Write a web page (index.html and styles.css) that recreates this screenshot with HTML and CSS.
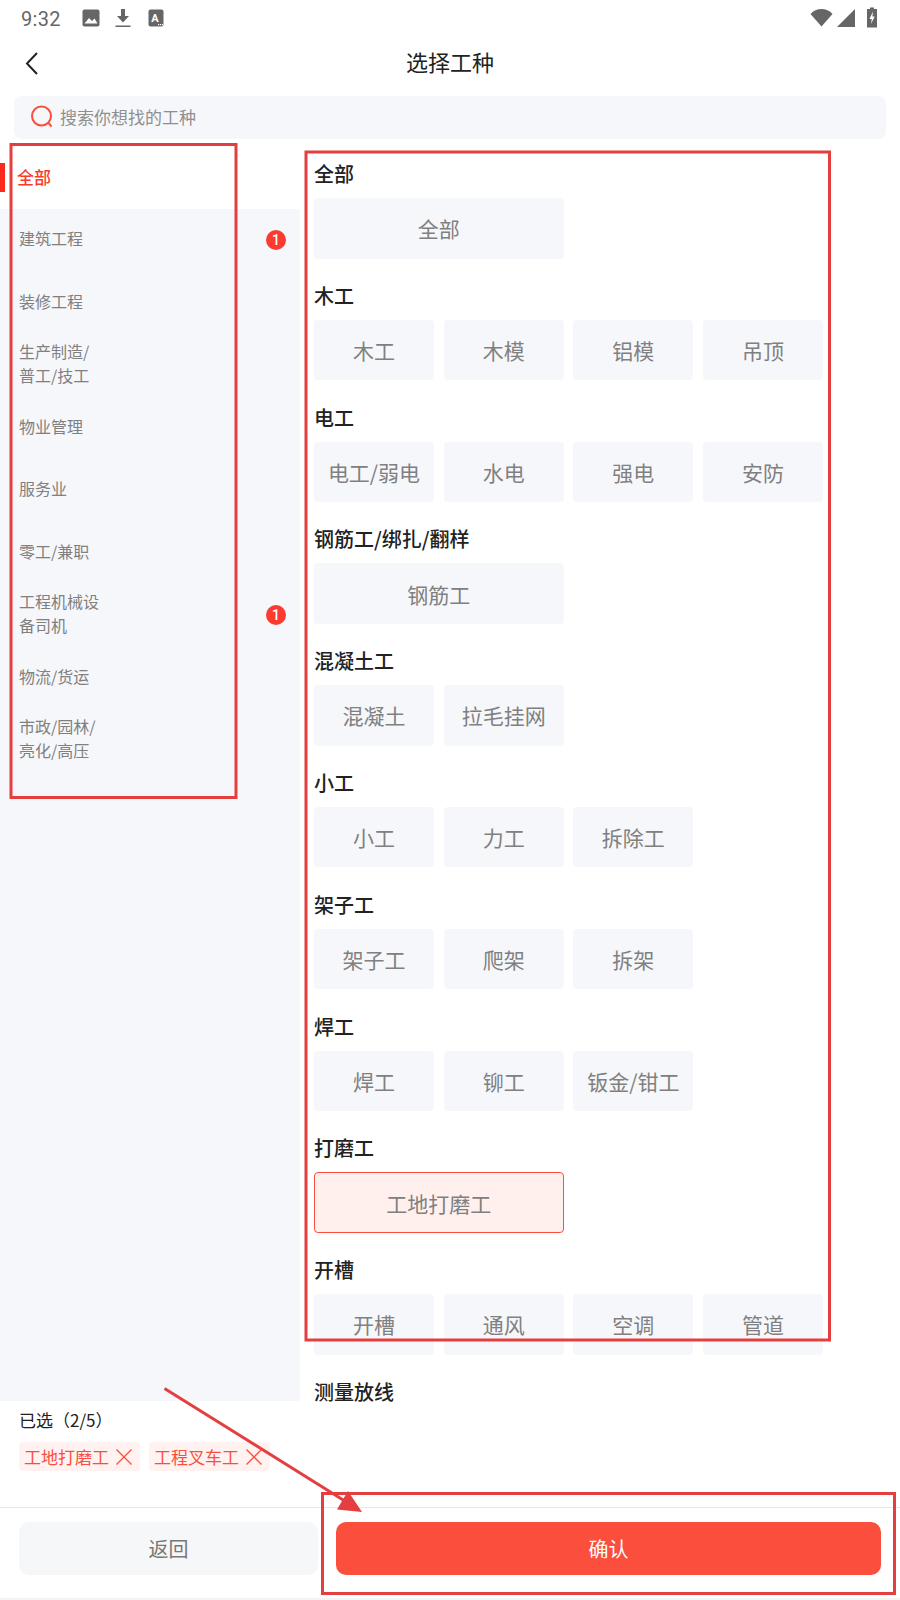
FILE: index.html
```html
<!DOCTYPE html>
<html lang="zh">
<head>
<meta charset="utf-8">
<title>选择工种</title>
<link rel="stylesheet" href="styles.css">
</head>
<body>
<div class="app">
  <div class="status">
    <span class="time">9:32</span>
    <svg class="si si-img" viewBox="0 0 18 18"><rect x="0.5" y="0.5" width="17" height="17" rx="2" fill="#666"/><path d="M2.5 14.5 L7 9 L10 12 L12.5 9.5 L15.5 14.5 Z" fill="#fff"/></svg>
    <svg class="si si-dl" viewBox="0 0 16 20"><path d="M6 1 H10 V8 H14 L8 14.5 L2 8 H6 Z M0.5 17.5 H15.5 V19 H0.5 Z" fill="#666"/></svg>
    <svg class="si si-a" viewBox="0 0 16 18"><rect x="0.5" y="0.5" width="15" height="17" rx="2" fill="#666"/><text x="7" y="12.5" class="a-glyph">A</text><path d="M10 15 h1.2 v1.2 h-1.2z M12 15 h1.2 v1.2 h-1.2z M14 15 h1 v1.2 h-1z" fill="#fff"/></svg>
    <span class="status-gap"></span>
    <svg class="si si-wifi" viewBox="0 0 23 19"><path d="M0.5 6 C6 -0.8 17 -0.8 22.5 6 L11.5 18.5 Z" fill="#666"/></svg>
    <svg class="si si-sig" viewBox="0 0 18 18"><path d="M0 18 L18 0 V18 Z" fill="#666"/></svg>
    <svg class="si si-bat" viewBox="0 0 12 21"><path d="M4 0.5 H8 V2 H11 V20.5 H1 V2 H4 Z" fill="#666"/><path d="M7 4.5 L3.5 12 H5.8 L5 17 L8.7 9.5 H6.4 Z" fill="#fff"/></svg>
  </div>

  <header class="nav">
    <svg class="back" viewBox="0 0 14 24"><path d="M12 2 L2 12.5 L12 23" fill="none" stroke="#222" stroke-width="2"/></svg>
    <h1 class="title">选择工种</h1>
  </header>

  <div class="search">
    <svg class="search-ic" viewBox="0 0 24 24"><circle cx="11.5" cy="11" r="9.5" fill="none" stroke="#fb4e3c" stroke-width="2"/><path d="M18.5 18 L21.5 21.5" fill="none" stroke="#fb4e3c" stroke-width="2"/></svg>
    <span>搜索你想找的工种</span>
  </div>

  <main class="main">
    <nav class="side">
      <div class="cat cat-active"><i class="mark"></i>全部</div>
      <div class="cat">建筑工程<b class="badge">1</b></div>
      <div class="cat">装修工程</div>
      <div class="cat">生产制造/<br>普工/技工</div>
      <div class="cat">物业管理</div>
      <div class="cat">服务业</div>
      <div class="cat">零工/兼职</div>
      <div class="cat">工程机械设<br>备司机<b class="badge">1</b></div>
      <div class="cat">物流/货运</div>
      <div class="cat">市政/园林/<br>亮化/高压</div>
    </nav>
    <div class="list">
      <section class="group"><h2>全部</h2><div class="grid"><a class="job wide">全部</a></div></section>
      <section class="group"><h2>木工</h2><div class="grid"><a class="job">木工</a><a class="job">木模</a><a class="job">铝模</a><a class="job">吊顶</a></div></section>
      <section class="group"><h2>电工</h2><div class="grid"><a class="job">电工/弱电</a><a class="job">水电</a><a class="job">强电</a><a class="job">安防</a></div></section>
      <section class="group"><h2>钢筋工/绑扎/翻样</h2><div class="grid"><a class="job wide">钢筋工</a></div></section>
      <section class="group"><h2>混凝土工</h2><div class="grid"><a class="job">混凝土</a><a class="job">拉毛挂网</a></div></section>
      <section class="group"><h2>小工</h2><div class="grid"><a class="job">小工</a><a class="job">力工</a><a class="job">拆除工</a></div></section>
      <section class="group"><h2>架子工</h2><div class="grid"><a class="job">架子工</a><a class="job">爬架</a><a class="job">拆架</a></div></section>
      <section class="group"><h2>焊工</h2><div class="grid"><a class="job">焊工</a><a class="job">铆工</a><a class="job">钣金/钳工</a></div></section>
      <section class="group"><h2>打磨工</h2><div class="grid"><a class="job wide job-on">工地打磨工</a></div></section>
      <section class="group"><h2>开槽</h2><div class="grid"><a class="job">开槽</a><a class="job">通风</a><a class="job">空调</a><a class="job">管道</a></div></section>
      <section class="group"><h2>测量放线</h2></section>
    </div>
  </main>

  <div class="picked">
    <div class="picked-label">已选（2/5）</div>
    <div class="tags">
      <span class="tag">工地打磨工<svg class="x" viewBox="0 0 16 16"><path d="M0.5 0.5 L15.5 15.5 M15.5 0.5 L0.5 15.5" stroke="#fb4e3c" stroke-width="1.3" fill="none"/></svg></span>
      <span class="tag">工程叉车工<svg class="x" viewBox="0 0 16 16"><path d="M0.5 0.5 L15.5 15.5 M15.5 0.5 L0.5 15.5" stroke="#fb4e3c" stroke-width="1.3" fill="none"/></svg></span>
    </div>
  </div>

  <footer class="foot">
    <button class="btn btn-back">返回</button>
    <button class="btn btn-ok">确认</button>
  </footer>

  <svg class="marks" viewBox="0 0 900 1600">
    <rect x="11" y="144.5" width="225" height="653" fill="none" stroke="#e53e3e" stroke-width="3"/>
    <rect x="306" y="152" width="523.5" height="1188" fill="none" stroke="#e53e3e" stroke-width="3"/>
    <rect x="322.5" y="1493.5" width="572" height="100" fill="none" stroke="#e53e3e" stroke-width="3"/>
    <path d="M164.5 1388.5 L348 1503" stroke="#e53e3e" stroke-width="3" fill="none"/>
    <path d="M348 1491 L362 1512 L337 1509.5 Z" fill="#e53e3e"/>
  </svg>
</div>
</body>
</html>
```
FILE: styles.css
```css
* { box-sizing: border-box; margin: 0; padding: 0; }
html, body { background: #fff; }
body { width: 900px; height: 1600px; overflow: hidden; font-family: "Noto Sans CJK SC", "Noto Sans", sans-serif; text-spacing-trim: space-all; }
.app { position: relative; width: 900px; height: 1600px; display: flex; flex-direction: column; border-bottom: 2px solid #f4f4f4; overflow: hidden; }

.status { height: 38px; flex: none; display: flex; align-items: center; padding: 0 22px 3px 21px; }
.time { font: 20px/38px Roboto, sans-serif; color: #666; width: 61px; letter-spacing: 0.3px; margin-top: 3px; }
.si { display: block; flex: none; }
.si-img { width: 18px; height: 18px; }
.si-dl { width: 16px; height: 20px; margin-left: 15px; }
.si-a { width: 16px; height: 18px; margin-left: 17px; }
.a-glyph { font: bold 11px Roboto, sans-serif; fill: #fff; text-anchor: middle; }
.status-gap { flex: 1; }
.si-wifi { width: 23px; height: 19px; }
.si-sig { width: 18px; height: 18px; margin-left: 4px; }
.si-bat { width: 12px; height: 21px; margin-left: 11px; }

.nav { height: 50px; flex: none; position: relative; display: flex; align-items: flex-start; justify-content: center; }
.back { position: absolute; left: 25px; top: 13px; width: 14px; height: 24px; }
.title { font-size: 22px; font-weight: 400; color: #222; line-height: 46px; }

.search { height: 43px; flex: none; margin: 8px 14px 7px; background: #f6f7fb; border-radius: 8px; display: flex; align-items: center; padding: 0 0 2px 16px; font-size: 17px; color: #8f8f8f; }
.search-ic { width: 24px; height: 24px; margin-right: 6px; }

.main { height: 1255px; flex: none; display: flex; }
.side { width: 300px; flex: none; background: #f6f7fb; }
.cat { position: relative; height: 62.5px; display: flex; flex-direction: column; justify-content: center; padding: 0 0 3px 19px; font-size: 16px; line-height: 24px; color: #808080; }
.cat-active { background: #fff; padding: 0 0 0 17px; font-size: 17px; font-weight: 500; color: #fb3b2a; }
.mark { position: absolute; left: 0; top: 17px; width: 5px; height: 29px; background: #fb2a1c; }
.badge { position: absolute; left: 266px; top: 21px; width: 20px; height: 20px; border-radius: 50%; background: #fb3b30; color: #fff; font: 500 14px/20px Roboto, sans-serif; text-align: center; }

.list { flex: 1; padding: 14px 77px 0 14px; }
.group { margin-bottom: 23.3px; }
.group:last-child { margin-bottom: 0; }
.group h2 { font-size: 20px; font-weight: 500; line-height: 28px; height: 28px; color: #222; margin-bottom: 10px; }
.grid { display: grid; grid-template-columns: repeat(4, 120px); column-gap: 9.67px; }
.job { height: 60.5px; background: #f6f7fb; border-radius: 4px; display: flex; align-items: center; justify-content: center; font-size: 21px; color: #808080; white-space: nowrap; }
.wide { grid-column: span 2; }
.job-on { background: #fff0ee; border: 1px solid #fb4e3c; }

.picked { flex: 1; padding: 7px 20px 0 19px; }
.picked-label { font-size: 17px; line-height: 24px; color: #222; }
.tags { display: flex; gap: 9px; margin-top: 10px; }
.tag { height: 29px; width: 121px; background: #fff2f0; border-radius: 4px; padding-left: 5px; display: flex; align-items: center; font-size: 17px; color: #fb4e3c; white-space: nowrap; }
.x { width: 16px; height: 16px; margin-left: 6.5px; }

.foot { height: 91px; flex: none; border-top: 1px solid #e8e8e8; display: flex; align-items: flex-start; padding: 14px 19px 0; gap: 18px; }
.btn { height: 53px; border: 0; border-radius: 10px; font-family: inherit; font-size: 20px; }
.btn-back { width: 299px; background: #f6f7f9; color: #777; }
.btn-ok { width: 545px; background: #fb4e3c; color: #fff; }

.marks { position: absolute; left: 0; top: 0; width: 900px; height: 1600px; pointer-events: none; }
```
